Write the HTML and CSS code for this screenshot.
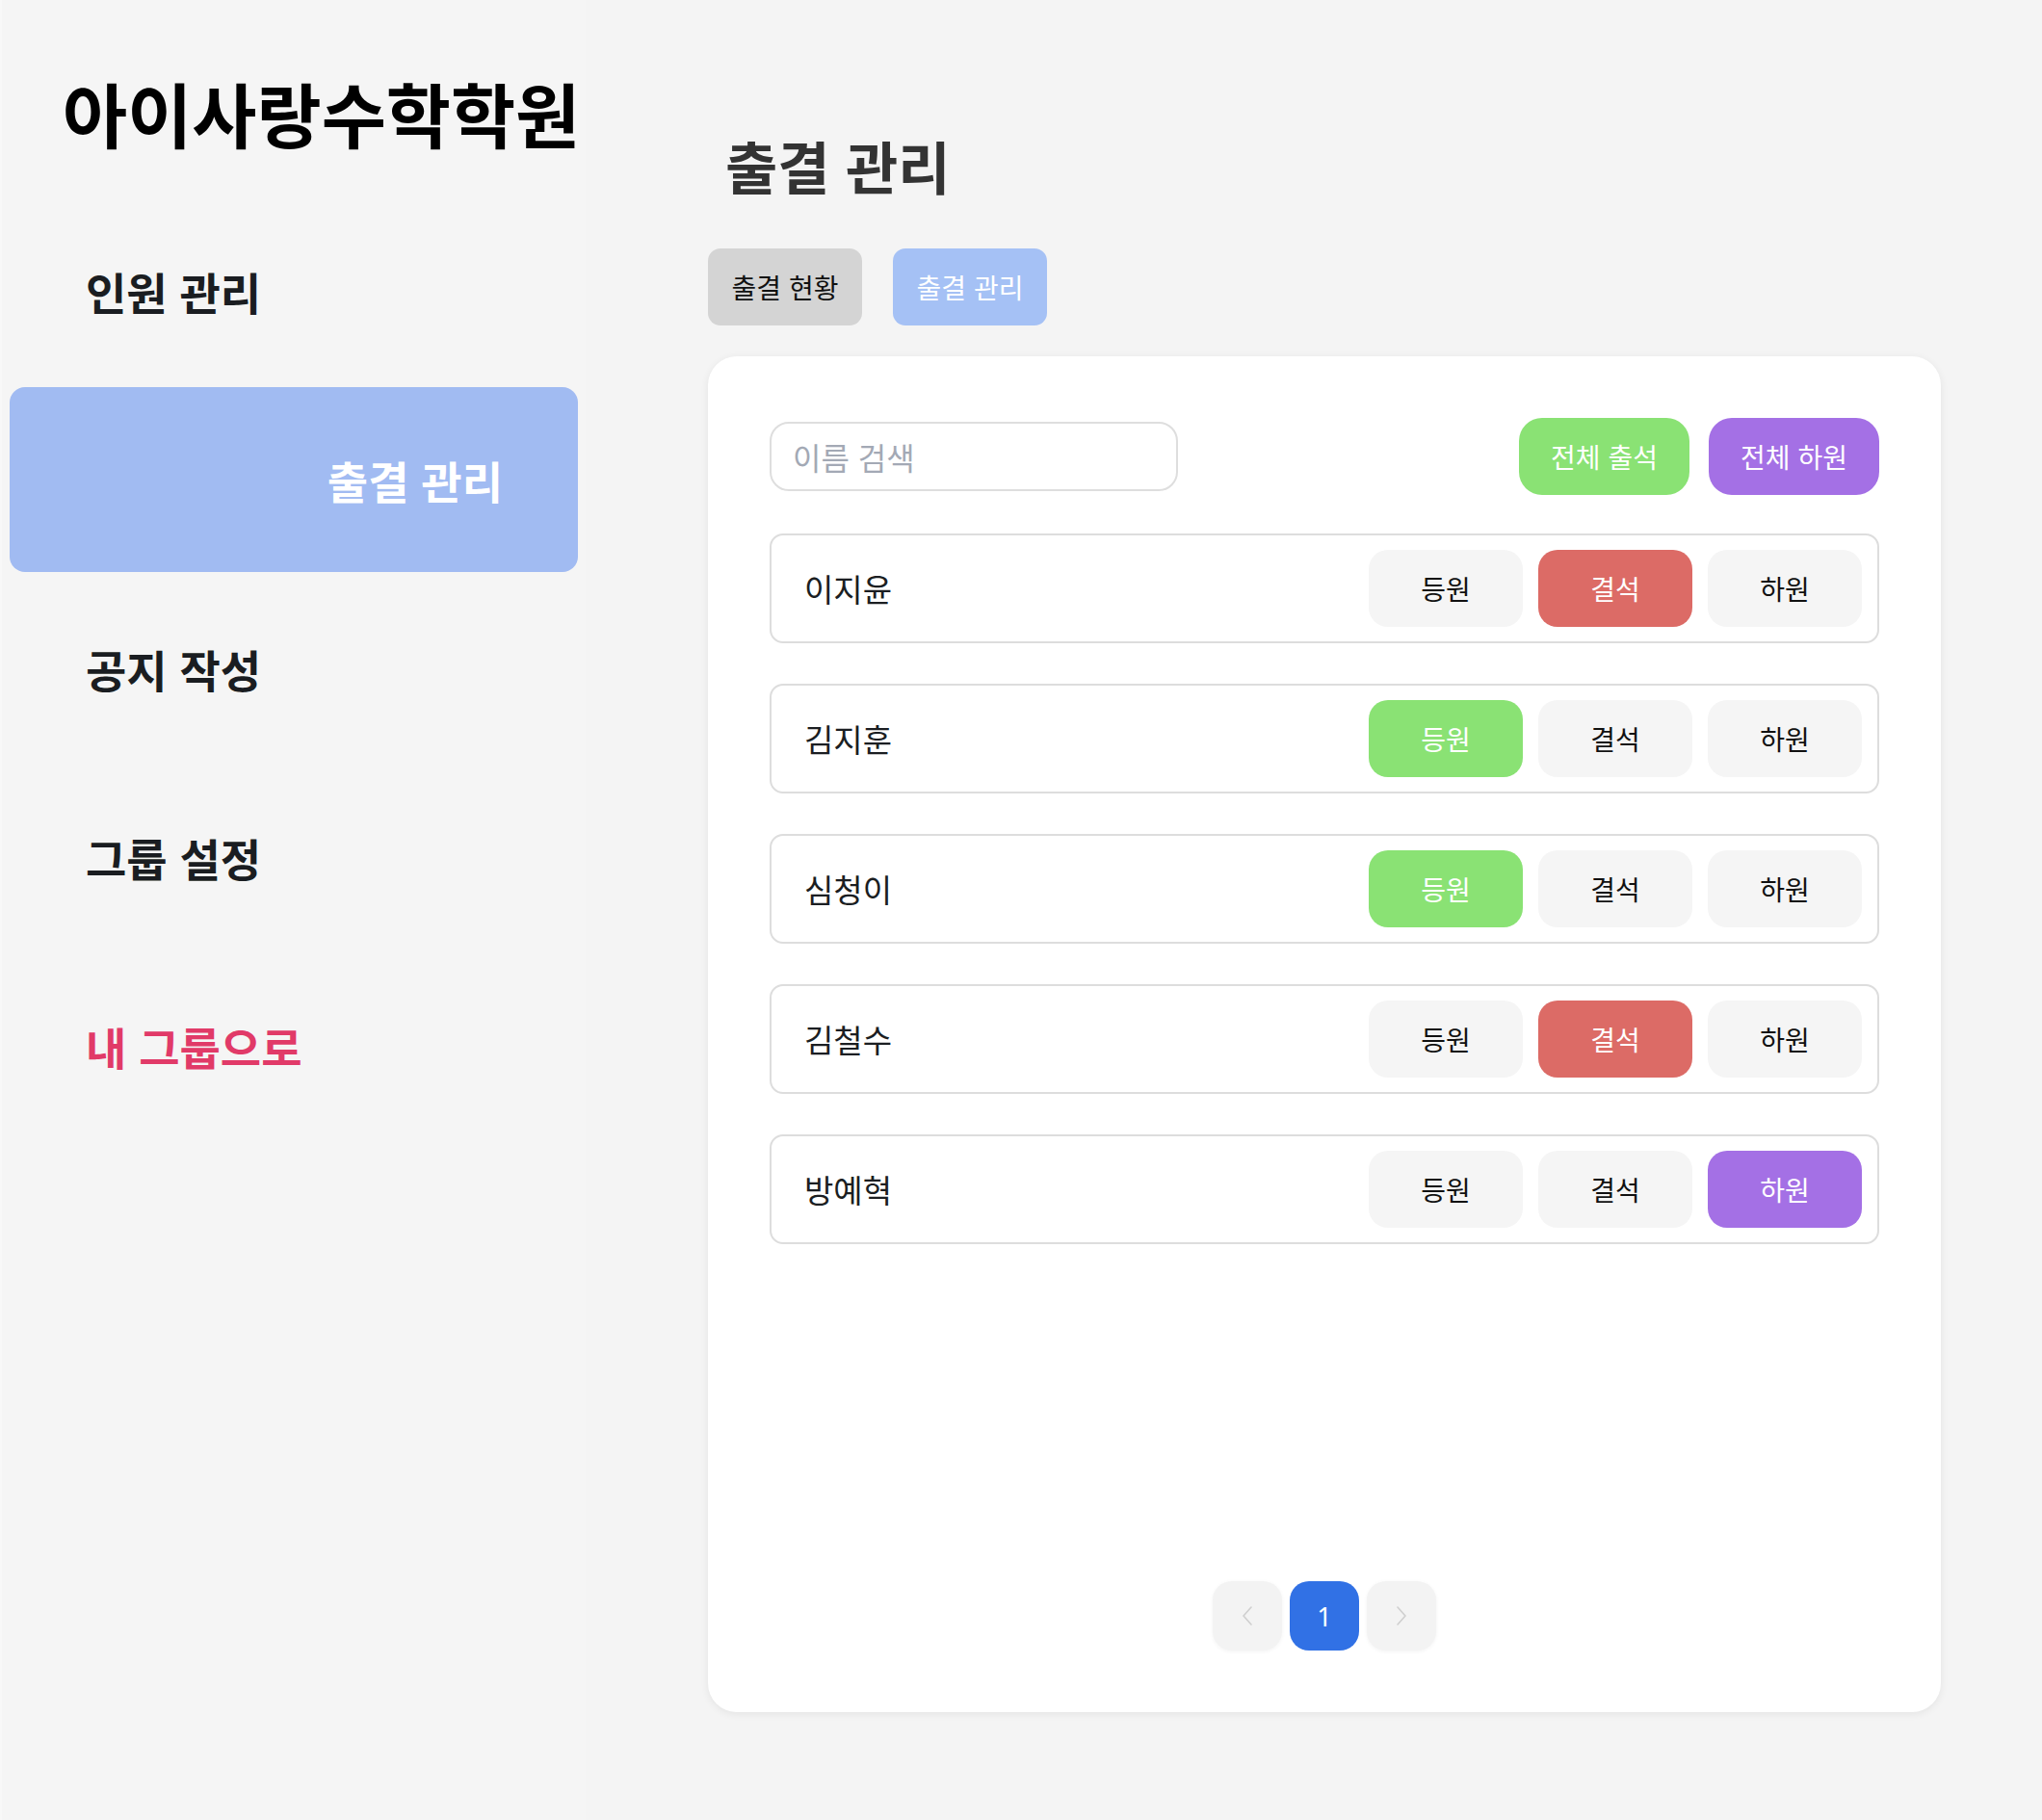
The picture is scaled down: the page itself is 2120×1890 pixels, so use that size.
FILE: index.html
```html
<!DOCTYPE html>
<html lang="ko">
<head>
<meta charset="utf-8">
<title>출결 관리</title>
<link rel="stylesheet" href="styles.css">
</head>
<body>
<div class="layout">
  <aside class="sidebar">
    <h1 class="brand">아이사랑수학학원</h1>
    <nav class="nav">
      <a class="nav-item">인원 관리</a>
      <a class="nav-item active">출결 관리</a>
      <a class="nav-item">공지 작성</a>
      <a class="nav-item">그룹 설정</a>
      <a class="nav-item back">내 그룹으로</a>
    </nav>
  </aside>
  <main class="main">
    <h2 class="page-title">출결 관리</h2>
    <div class="tabs">
      <button class="tab">출결 현황</button>
      <button class="tab tab-active">출결 관리</button>
    </div>
    <section class="card">
      <div class="toolbar">
        <input class="search" type="text" placeholder="이름 검색">
        <div class="bulk">
          <button class="bulk-btn green">전체 출석</button>
          <button class="bulk-btn purple">전체 하원</button>
        </div>
      </div>
      <ul class="list">
        <li class="row">
          <span class="name">이지윤</span>
          <div class="actions">
            <button class="act">등원</button>
            <button class="act red">결석</button>
            <button class="act">하원</button>
          </div>
        </li>
        <li class="row">
          <span class="name">김지훈</span>
          <div class="actions">
            <button class="act green">등원</button>
            <button class="act">결석</button>
            <button class="act">하원</button>
          </div>
        </li>
        <li class="row">
          <span class="name">심청이</span>
          <div class="actions">
            <button class="act green">등원</button>
            <button class="act">결석</button>
            <button class="act">하원</button>
          </div>
        </li>
        <li class="row">
          <span class="name">김철수</span>
          <div class="actions">
            <button class="act">등원</button>
            <button class="act red">결석</button>
            <button class="act">하원</button>
          </div>
        </li>
        <li class="row">
          <span class="name">방예혁</span>
          <div class="actions">
            <button class="act">등원</button>
            <button class="act">결석</button>
            <button class="act purple">하원</button>
          </div>
        </li>
      </ul>
      <div class="pager">
        <button class="pg pg-arrow" aria-label="이전">
          <svg width="12" height="20" viewBox="0 0 12 20"><path d="M10 1 L2 10 L10 19" fill="none" stroke="#cfcfcf" stroke-width="1.6" stroke-linecap="round" stroke-linejoin="round"/></svg>
        </button>
        <button class="pg pg-current">1</button>
        <button class="pg pg-arrow" aria-label="다음">
          <svg width="12" height="20" viewBox="0 0 12 20"><path d="M2 1 L10 10 L2 19" fill="none" stroke="#cfcfcf" stroke-width="1.6" stroke-linecap="round" stroke-linejoin="round"/></svg>
        </button>
      </div>
    </section>
  </main>
</div>
</body>
</html>
```

FILE: styles.css
```css
* { box-sizing: border-box; }

html, body {
  margin: 0;
  padding: 0;
  background: #f4f4f4;
  font-family: "Noto Sans CJK KR", "Noto Sans", sans-serif;
}

.layout {
  display: flex;
  min-height: 1890px;
}

.sidebar {
  width: 608px;
  padding: 0 8px;
  background: #f5f5f5;
  border-left: 2px solid #f8f8f8;
}

.brand {
  margin: 80px 0 0 55px;
  font-size: 73px;
  line-height: 72px;
  font-weight: 700;
  color: #000;
  white-space: nowrap;
}

.nav {
  display: flex;
  flex-direction: column;
  gap: 4px;
  margin-top: 54px;
}

.nav-item {
  display: flex;
  align-items: center;
  height: 192px;
  padding-left: 79px;
  font-size: 46px;
  font-weight: 700;
  color: #1a1d21;
  text-decoration: none;
  cursor: pointer;
}

.nav-item.active {
  justify-content: flex-end;
  padding: 0 78px 0 0;
  background: #a1bbf2;
  color: #fff;
  border-radius: 16px;
}

.nav-item.back {
  color: #e13a68;
}

.main {
  padding-left: 127px;
  width: 1408px;
}

.page-title {
  margin: 142px 0 0;
  padding-left: 18px;
  font-size: 59px;
  line-height: 59px;
  font-weight: 700;
  color: #333;
}

.tabs {
  display: flex;
  gap: 32px;
  margin-top: 57px;
}

.tab {
  height: 80px;
  width: 160px;
  border: none;
  border-radius: 13px;
  background: #d4d4d4;
  color: #111;
  font-family: inherit;
  font-size: 28px;
  padding: 0;
}

.tab-active {
  background: #a5c1f5;
  color: #fff;
}

.card {
  display: flex;
  flex-direction: column;
  width: 1280px;
  height: 1408px;
  margin-top: 32px;
  padding: 64px;
  background: #fff;
  border-radius: 30px;
  box-shadow: 0 2px 8px rgba(0, 0, 0, 0.07);
}

.toolbar {
  display: flex;
  align-items: center;
  justify-content: space-between;
  height: 80px;
}

.search {
  width: 424px;
  height: 72px;
  border: 2px solid #dedede;
  border-radius: 20px;
  padding: 0 22px;
  font-family: inherit;
  font-size: 32px;
  color: #222;
  outline: none;
}

.search::placeholder {
  color: #a3a9b5;
}

.bulk {
  display: flex;
  gap: 20px;
}

.bulk-btn {
  width: 177px;
  height: 80px;
  border: none;
  border-radius: 24px;
  color: #fff;
  font-family: inherit;
  font-size: 28px;
  padding: 0;
}

.green { background: #8ae274; color: #fff; }
.purple { background: #a470e5; color: #fff; }
.red { background: #dc6b66; color: #fff; }

.list {
  list-style: none;
  margin: 40px 0 0;
  padding: 0;
  display: flex;
  flex-direction: column;
  gap: 42px;
}

.row {
  display: flex;
  align-items: center;
  justify-content: space-between;
  height: 114px;
  padding: 0 16px 0 34px;
  border: 2px solid #dddddd;
  border-radius: 14px;
}

.name {
  font-size: 33px;
  color: #1b1e22;
}

.actions {
  display: flex;
  gap: 16px;
}

.act {
  width: 160px;
  height: 80px;
  border: none;
  border-radius: 20px;
  background: #f5f5f5;
  color: #111;
  font-family: inherit;
  font-size: 28px;
  padding: 0;
}

.act.green, .act.red, .act.purple { color: #fff; }
.act.green { background: #8ae274; }
.act.red { background: #dc6b66; }
.act.purple { background: #a470e5; }

.pager {
  margin-top: auto;
  display: flex;
  justify-content: center;
  gap: 8px;
}

.pg {
  width: 72px;
  height: 72px;
  border: none;
  border-radius: 20px;
  display: flex;
  align-items: center;
  justify-content: center;
  padding: 0;
  font-family: "Noto Sans", "Open Sans", sans-serif;
}

.pg-arrow {
  background: #f3f3f3;
  box-shadow: 0 1px 4px rgba(0, 0, 0, 0.05);
}

.pg-current {
  background: #3171e5;
  color: #fff;
  font-size: 27px;
}
```
